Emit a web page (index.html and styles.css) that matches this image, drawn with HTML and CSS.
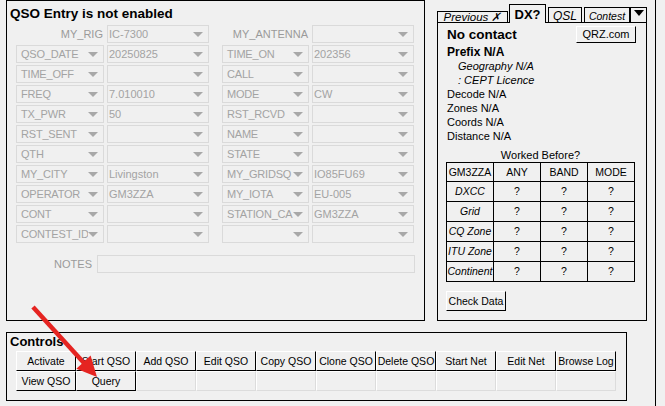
FILE: index.html
```html
<!DOCTYPE html>
<html>
<head>
<meta charset="utf-8">
<link rel="stylesheet" href="styles.css">
</head>
<body>
<div class="app">
  <div class="top">
    <section class="entry">
      <h1 class="entry-title">QSO Entry is not enabled</h1>
      <div class="fields">
        <div class="fgroup">
          <span class="plabel">MY_RIG</span>
          <div class="combo val"><span class="txt">IC-7300</span><span class="arr"></span></div>
          <div class="combo"><span class="txt">QSO_DATE</span><span class="arr"></span></div>
          <div class="combo val"><span class="txt">20250825</span><span class="arr"></span></div>
          <div class="combo"><span class="txt">TIME_OFF</span><span class="arr"></span></div>
          <div class="combo val"><span class="txt"></span><span class="arr"></span></div>
          <div class="combo"><span class="txt">FREQ</span><span class="arr"></span></div>
          <div class="combo val"><span class="txt">7.010010</span><span class="arr"></span></div>
          <div class="combo"><span class="txt">TX_PWR</span><span class="arr"></span></div>
          <div class="combo val"><span class="txt">50</span><span class="arr"></span></div>
          <div class="combo"><span class="txt">RST_SENT</span><span class="arr"></span></div>
          <div class="combo val"><span class="txt"></span><span class="arr"></span></div>
          <div class="combo"><span class="txt">QTH</span><span class="arr"></span></div>
          <div class="combo val"><span class="txt"></span><span class="arr"></span></div>
          <div class="combo"><span class="txt">MY_CITY</span><span class="arr"></span></div>
          <div class="combo val"><span class="txt">Livingston</span><span class="arr"></span></div>
          <div class="combo"><span class="txt">OPERATOR</span><span class="arr"></span></div>
          <div class="combo val"><span class="txt">GM3ZZA</span><span class="arr"></span></div>
          <div class="combo"><span class="txt">CONT</span><span class="arr"></span></div>
          <div class="combo val"><span class="txt"></span><span class="arr"></span></div>
          <div class="combo"><span class="txt">CONTEST_ID</span><span class="arr"></span></div>
          <div class="combo val"><span class="txt"></span><span class="arr"></span></div>
        </div>
        <div class="fgroup right">
          <span class="plabel">MY_ANTENNA</span>
          <div class="combo val"><span class="txt"></span><span class="arr"></span></div>
          <div class="combo"><span class="txt">TIME_ON</span><span class="arr"></span></div>
          <div class="combo val"><span class="txt">202356</span><span class="arr"></span></div>
          <div class="combo"><span class="txt">CALL</span><span class="arr"></span></div>
          <div class="combo val"><span class="txt"></span><span class="arr"></span></div>
          <div class="combo"><span class="txt">MODE</span><span class="arr"></span></div>
          <div class="combo val"><span class="txt">CW</span><span class="arr"></span></div>
          <div class="combo"><span class="txt">RST_RCVD</span><span class="arr"></span></div>
          <div class="combo val"><span class="txt"></span><span class="arr"></span></div>
          <div class="combo"><span class="txt">NAME</span><span class="arr"></span></div>
          <div class="combo val"><span class="txt"></span><span class="arr"></span></div>
          <div class="combo"><span class="txt">STATE</span><span class="arr"></span></div>
          <div class="combo val"><span class="txt"></span><span class="arr"></span></div>
          <div class="combo"><span class="txt">MY_GRIDSQ</span><span class="arr"></span></div>
          <div class="combo val"><span class="txt">IO85FU69</span><span class="arr"></span></div>
          <div class="combo"><span class="txt">MY_IOTA</span><span class="arr"></span></div>
          <div class="combo val"><span class="txt">EU-005</span><span class="arr"></span></div>
          <div class="combo"><span class="txt">STATION_CA</span><span class="arr"></span></div>
          <div class="combo val"><span class="txt">GM3ZZA</span><span class="arr"></span></div>
          <div class="combo"><span class="txt"></span><span class="arr"></span></div>
          <div class="combo val"><span class="txt"></span><span class="arr"></span></div>
        </div>
      </div>
      <div class="notes-row">
        <span class="plabel notes-label">NOTES</span>
        <div class="notes-field"></div>
      </div>
    </section>

    <aside class="side">
      <div class="tabs">
        <div class="tab tab-prev">Previous ✗</div>
        <div class="tab tab-dx">DX?</div>
        <div class="tab tab-qsl">QSL</div>
        <div class="tab tab-contest">Contest</div>
        <div class="tab tab-menu"></div>
      </div>
      <div class="tabframe">
        <div class="nc-row">
          <span class="nc">No contact</span>
          <div class="btn qrz">QRZ.com</div>
        </div>
        <div class="line b">Prefix N/A</div>
        <div class="line i">Geography N/A</div>
        <div class="line i">: CEPT Licence</div>
        <div class="line">Decode N/A</div>
        <div class="line">Zones N/A</div>
        <div class="line">Coords N/A</div>
        <div class="line">Distance N/A</div>
        <div class="wb-title">Worked Before?</div>
        <div class="wb">
          <div>GM3ZZA</div><div>ANY</div><div>BAND</div><div>MODE</div>
          <div class="rh">DXCC</div><div>?</div><div>?</div><div>?</div>
          <div class="rh">Grid</div><div>?</div><div>?</div><div>?</div>
          <div class="rh">CQ Zone</div><div>?</div><div>?</div><div>?</div>
          <div class="rh">ITU Zone</div><div>?</div><div>?</div><div>?</div>
          <div class="rh">Continent</div><div>?</div><div>?</div><div>?</div>
        </div>
        <div class="btn check">Check Data</div>
      </div>
    </aside>
  </div>

  <section class="controls">
    <h2 class="controls-title">Controls</h2>
    <div class="ctl-grid">
      <div class="btn">Activate</div>
      <div class="btn">Start QSO</div>
      <div class="btn">Add QSO</div>
      <div class="btn">Edit QSO</div>
      <div class="btn">Copy QSO</div>
      <div class="btn">Clone QSO</div>
      <div class="btn">Delete QSO</div>
      <div class="btn">Start Net</div>
      <div class="btn">Edit Net</div>
      <div class="btn">Browse Log</div>
      <div class="btn">View QSO</div>
      <div class="btn">Query</div>
      <div class="btn empty"></div>
      <div class="btn empty"></div>
      <div class="btn empty"></div>
      <div class="btn empty"></div>
      <div class="btn empty"></div>
      <div class="btn empty"></div>
      <div class="btn empty"></div>
      <div class="btn empty"></div>
    </div>
  </section>

  <svg class="annot" width="665" height="406" viewBox="0 0 665 406">
    <line x1="33" y1="307" x2="84" y2="363" stroke="#e52421" stroke-width="4.5"/>
    <polygon points="97,377 76.4,368.8 90.6,355.6" fill="#e52421"/>
  </svg>
</div>
</body>
</html>
```

FILE: styles.css
```css
html, body {
  margin: 0;
  padding: 0;
}
body {
  background: #f0f0f0;
  font-family: "Liberation Sans", Arial, sans-serif;
  color: #000;
}
.app {
  position: relative;
  width: 656px;
  height: 406px;
  border-right: 1px solid #000;
  box-sizing: border-box;
}
.top {
  display: flex;
}

/* ---------- QSO entry panel ---------- */
.entry {
  margin-left: 6px;
  width: 419px;
  height: 321px;
  box-sizing: border-box;
  border: 1px solid #000;
}
.entry-title {
  margin: 5px 0 0 3px;
  font-size: 13.5px;
  font-weight: bold;
  line-height: 16px;
}
.fields {
  display: flex;
  gap: 13px;
  margin: 3px 0 0 9px;
}
.fgroup {
  display: grid;
  grid-template-columns: 88px 102px;
  grid-auto-rows: 18px;
  gap: 2px 3px;
}
.fgroup.right {
  grid-template-columns: 87px 102px;
}
.combo {
  display: grid;
  grid-template-columns: 1fr 20px;
  box-sizing: border-box;
  border: 1px solid #dadada;
  color: #a3a3a3;
  font-size: 11px;
  overflow: hidden;
}
.combo.val {
  grid-template-columns: 1fr 21px;
}
.combo .txt {
  grid-column: 1 / 3;
  grid-row: 1;
  min-width: 0;
  height: 16px;
  line-height: 17px;
  padding-left: 4px;
  margin-right: 15px;
  letter-spacing: -0.2px;
  overflow: hidden;
  white-space: nowrap;
}
.combo.val .txt {
  padding-left: 1px;
  letter-spacing: 0;
}
.combo .arr {
  grid-column: 2;
  grid-row: 1;
  display: flex;
  align-items: center;
  justify-content: center;
}
.combo .arr::after {
  content: "";
  border-left: 5px solid transparent;
  border-right: 5px solid transparent;
  border-top: 5px solid #a8a8a8;
}
.plabel {
  text-align: right;
  font-size: 11px;
  line-height: 18px;
  color: #9a9a9a;
  padding-right: 1px;
  white-space: nowrap;
}
.notes-row {
  display: flex;
  gap: 4px;
  margin: 12px 0 0 9px;
}
.notes-label {
  width: 77px;
  box-sizing: border-box;
}
.notes-field {
  width: 318px;
  height: 18px;
  box-sizing: border-box;
  border: 1px solid #dadada;
}

/* ---------- right side ---------- */
.side {
  flex: 1;
  padding-top: 4px;
}
.tabs {
  display: flex;
  align-items: flex-end;
  height: 18px;
  margin-left: 12px;
}
.tab {
  box-sizing: border-box;
  border: 1px solid #000;
  border-bottom: none;
  text-align: center;
  white-space: nowrap;
  overflow: hidden;
  background: #f0f0f0;
}
.tab-prev {
  width: 71px;
  height: 11px;
  margin-right: 1px;
  font-style: italic;
  font-size: 11.5px;
  line-height: 10px;
  overflow: visible;
}
.tab-dx {
  position: relative;
  z-index: 1;
  width: 37px;
  height: 19px;
  margin-bottom: -1px;
  margin-right: 2px;
  padding-top: 1px;
  font-weight: bold;
  font-size: 13px;
  line-height: 17px;
}
.tab-qsl {
  width: 34px;
  height: 15px;
  margin-right: 2px;
  padding-top: 3px;
  font-style: italic;
  font-size: 12px;
  line-height: 11px;
}
.tab-contest {
  width: 46px;
  height: 15px;
  padding-top: 3px;
  font-style: italic;
  font-size: 10.5px;
  line-height: 11px;
}
.tab-menu {
  width: 17px;
  height: 15px;
  padding-top: 2px;
  display: flex;
  justify-content: center;
  align-items: flex-start;
}
.tab-menu::after {
  content: "";
  border-left: 5px solid transparent;
  border-right: 5px solid transparent;
  border-top: 6px solid #000;
}
.tabframe {
  margin-left: 12px;
  width: 210px;
  height: 299px;
  box-sizing: border-box;
  border: 1px solid #000;
  padding: 3px 10px 0 9px;
}
.nc-row {
  display: flex;
  justify-content: space-between;
  align-items: flex-start;
  height: 19px;
}
.nc {
  font-size: 13.5px;
  font-weight: bold;
  line-height: 17px;
}
.btn {
  box-sizing: border-box;
  background: #f0f0f0;
  border: 1px solid;
  border-color: #fff #000 #000 #fff;
  font-size: 11px;
  text-align: center;
  white-space: nowrap;
  overflow: hidden;
}
.qrz {
  width: 60px;
  height: 17px;
  line-height: 15px;
}
.line {
  font-size: 11px;
  line-height: 14px;
}
.line.b {
  font-weight: bold;
  font-size: 12px;
}
.line.i {
  font-style: italic;
  padding-left: 11px;
}
.wb-title {
  margin: 6px 0 0 -1px;
  width: 189px;
  text-align: center;
  font-size: 11px;
  line-height: 13px;
}
.wb {
  margin-left: -1px;
  width: 189px;
  box-sizing: border-box;
  display: grid;
  grid-template-columns: repeat(4, 47px);
  grid-template-rows: 19px repeat(5, 20px);
  border-left: 1px solid #000;
  border-top: 1px solid #000;
}
.wb > div {
  border-right: 1px solid #000;
  border-bottom: 1px solid #000;
  text-align: center;
  font-size: 10.5px;
  line-height: 19px;
  white-space: nowrap;
  overflow: hidden;
}
.wb > div:nth-child(-n+4) {
  line-height: 18px;
}
.wb > .rh {
  font-style: italic;
}
.check {
  width: 60px;
  height: 20px;
  margin: 9px 0 0 -1px;
  line-height: 18px;
  font-size: 10.5px;
}

/* ---------- controls ---------- */
.controls {
  margin: 11px 0 0 6px;
  width: 621px;
  height: 69px;
  box-sizing: border-box;
  border: 1px solid #000;
}
.controls-title {
  margin: 0 0 1px 3px;
  font-size: 13px;
  font-weight: bold;
  line-height: 17px;
}
.ctl-grid {
  display: grid;
  grid-template-columns: repeat(10, 60px);
  grid-auto-rows: 20px;
  margin-left: 9px;
}
.ctl-grid .btn {
  font-size: 10.5px;
  line-height: 18px;
}
.ctl-grid .empty {
  border-color: #fff #dcdcdc #dcdcdc #fff;
}

.annot {
  position: absolute;
  left: 0;
  top: 0;
  pointer-events: none;
}
```
